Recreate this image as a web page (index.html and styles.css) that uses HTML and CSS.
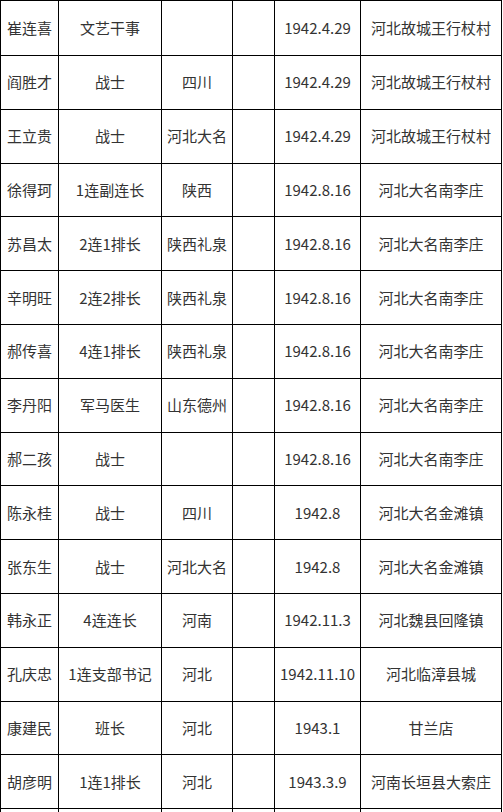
FILE: index.html
```html
<!DOCTYPE html>
<html lang="zh-CN">
<head>
<meta charset="utf-8">
<title>名单</title>
<link rel="stylesheet" href="styles.css">
</head>
<body>
<table class="roster">
  <colgroup>
    <col class="c-name"><col class="c-post"><col class="c-home"><col class="c-blank"><col class="c-date"><col class="c-place">
  </colgroup>
  <tbody>
    <tr><td>崔连喜</td><td>文艺干事</td><td></td><td></td><td>1942.4.29</td><td>河北故城王行杖村</td></tr>
    <tr><td>阎胜才</td><td>战士</td><td>四川</td><td></td><td>1942.4.29</td><td>河北故城王行杖村</td></tr>
    <tr><td>王立贵</td><td>战士</td><td>河北大名</td><td></td><td>1942.4.29</td><td>河北故城王行杖村</td></tr>
    <tr><td>徐得珂</td><td>1连副连长</td><td>陕西</td><td></td><td>1942.8.16</td><td>河北大名南李庄</td></tr>
    <tr><td>苏昌太</td><td>2连1排长</td><td>陕西礼泉</td><td></td><td>1942.8.16</td><td>河北大名南李庄</td></tr>
    <tr><td>辛明旺</td><td>2连2排长</td><td>陕西礼泉</td><td></td><td>1942.8.16</td><td>河北大名南李庄</td></tr>
    <tr><td>郝传喜</td><td>4连1排长</td><td>陕西礼泉</td><td></td><td>1942.8.16</td><td>河北大名南李庄</td></tr>
    <tr><td>李丹阳</td><td>军马医生</td><td>山东德州</td><td></td><td>1942.8.16</td><td>河北大名南李庄</td></tr>
    <tr><td>郝二孩</td><td>战士</td><td></td><td></td><td>1942.8.16</td><td>河北大名南李庄</td></tr>
    <tr><td>陈永桂</td><td>战士</td><td>四川</td><td></td><td>1942.8</td><td>河北大名金滩镇</td></tr>
    <tr><td>张东生</td><td>战士</td><td>河北大名</td><td></td><td>1942.8</td><td>河北大名金滩镇</td></tr>
    <tr><td>韩永正</td><td>4连连长</td><td>河南</td><td></td><td>1942.11.3</td><td>河北魏县回隆镇</td></tr>
    <tr><td>孔庆忠</td><td>1连支部书记</td><td>河北</td><td></td><td>1942.11.10</td><td>河北临漳县城</td></tr>
    <tr><td>康建民</td><td>班长</td><td>河北</td><td></td><td>1943.1</td><td>甘兰店</td></tr>
    <tr><td>胡彦明</td><td>1连1排长</td><td>河北</td><td></td><td>1943.3.9</td><td>河南长垣县大索庄</td></tr>
    <tr><td></td><td></td><td></td><td></td><td></td><td></td></tr>
  </tbody>
</table>
</body>
</html>
```
FILE: styles.css
```css
html, body {
  margin: 0;
  padding: 0;
  background: #ffffff;
  overflow: hidden;
}
body {
  font-family: "Noto Sans CJK SC", "Noto Sans", sans-serif;
  font-size: 15px;
  color: #333333;
}
.roster {
  border-collapse: collapse;
  table-layout: fixed;
  width: 502px;
}
.c-name { width: 58px; }
.c-post { width: 103px; }
.c-home { width: 71px; }
.c-blank { width: 42px; }
.c-date { width: 86px; }
.c-place { width: 141px; }
.roster td {
  border: 1px solid #000000;
  height: 52.8px;
  padding: 0;
  text-align: center;
  vertical-align: middle;
  white-space: nowrap;
  line-height: 20px;
}
.roster tr:first-child td {
  height: 54px;
}
```
